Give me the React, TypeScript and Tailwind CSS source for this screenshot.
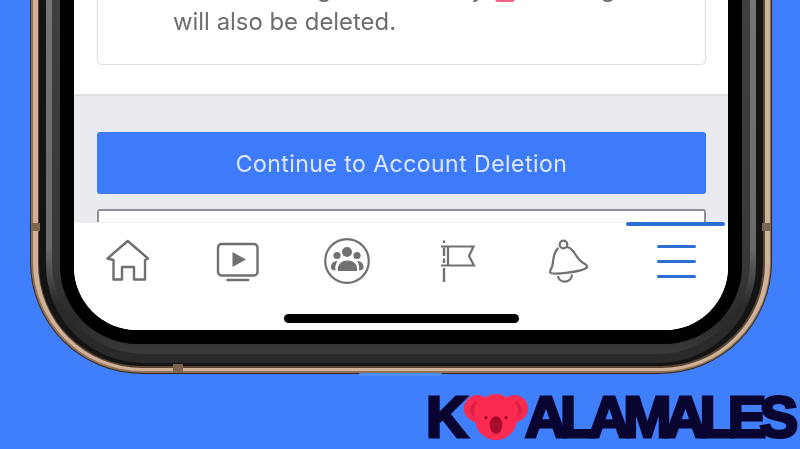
const G = "#6f7072";

function Home() {
  return (
    <svg width="109" height="48" viewBox="74 238 109 48" fill="none" stroke={G} strokeWidth="2.4" strokeLinejoin="round">
      <path d="M127.7 241 L107.5 258.5 L113.5 260 V279.5 H122 V267 H134 V279.5 H145 V260 L148 258.5 Z" />
    </svg>
  );
}

function Video() {
  return (
    <svg width="109" height="48" viewBox="183 238 109 48" fill="none" stroke={G} strokeWidth="2.4">
      <rect x="218" y="244" width="39.5" height="31.5" rx="3.5" />
      <path d="M227.5 280 H248" strokeWidth="2.6" strokeLinecap="round" />
      <path d="M232.5 252 L246 259.5 L232.5 267 Z" fill={G} stroke="none" />
    </svg>
  );
}

function Groups() {
  return (
    <svg width="109" height="48" viewBox="292 238 109 48" fill="none">
      <circle cx="347" cy="261" r="21.8" stroke={G} strokeWidth="2.2" />
      <g fill={G}>
        <circle cx="347" cy="252" r="5" />
        <circle cx="337" cy="255.5" r="3.6" />
        <circle cx="357" cy="255.5" r="3.6" />
        <path d="M338 271 C337 265 341 260.5 347.5 260.5 C354 260.5 358 265 357 271 Z" />
        <path d="M331 268.5 C330.5 264 333 261 337.5 261 C335.5 264 335 267 335.5 270.5 C333.5 270.5 332 269.8 331 268.5 Z" />
        <path d="M363.5 268.5 C364 264 361.5 261 357 261 C359 264 359.5 267 359 270.5 C361 270.5 362.5 269.8 363.5 268.5 Z" />
      </g>
    </svg>
  );
}

function Flag() {
  return (
    <svg width="109" height="48" viewBox="401 238 109 48" fill="none" stroke={G} strokeWidth="2.2">
      <path d="M444 240.5 V243" />
      <path d="M444 247.5 V256 M444 258.5 V263 M444 268 V282" strokeWidth="2.4" />
      <path d="M441 246.5 H473.5 L469 256 L474 265.5 H441" />
      <path d="M448 246.5 V265.5" />
    </svg>
  );
}

function Bell() {
  return (
    <svg width="109" height="48" viewBox="510 238 109 48" fill="none" stroke={G} strokeWidth="2.2" strokeLinejoin="round">
      <circle cx="563.5" cy="244.5" r="3.8" />
      <path d="M558.5 248 C553 252 553.5 260 552.5 265 C552 268.5 549.5 270 550.2 272.5 C551 275.5 584 271.5 586.8 267.5 C588 265.5 585 264 582.5 262.5 C578 259.5 576 255 573 251 C571 248.5 568.5 247.2 567 247" />
      <path d="M558 276 C559 284 571.5 283.5 572 274.5" />
    </svg>
  );
}

function Menu() {
  return (
    <div className="w-full pt-[7px] flex flex-col items-center gap-[12px] pl-[5px]">
      <div className="w-[39px] h-[3px] rounded-full bg-[#2b6fd4]" />
      <div className="w-[39px] h-[3px] rounded-full bg-[#2b6fd4]" />
      <div className="w-[39px] h-[3px] rounded-full bg-[#2b6fd4]" />
    </div>
  );
}

function Koala() {
  return (
    <svg width="64" height="48" viewBox="464 393 64 48" className="shrink-0">
      <circle cx="477.5" cy="408.5" r="13.5" fill="#fb2a50" />
      <circle cx="514.5" cy="408.5" r="13.5" fill="#fb2a50" />
      <ellipse cx="496" cy="419" rx="21" ry="21" fill="#fb2a50" />
      <circle cx="496" cy="411" r="17" fill="#fb2a50" />
      <path d="M478 401 C471 402 467 411 475 418 C473 411 474 405 478 401 Z" fill="#d81f45" />
      <path d="M514 401 C521 402 525 411 517 418 C519 411 518 405 514 401 Z" fill="#d81f45" />
      <circle cx="486" cy="417.7" r="1.8" fill="#a80b2c" />
      <circle cx="506" cy="417.7" r="1.8" fill="#a80b2c" />
      <ellipse cx="496" cy="425" rx="6.3" ry="9" fill="#a80b2c" />
    </svg>
  );
}

export default function App() {
  return (
    <div className="relative w-[800px] h-[449px] overflow-hidden bg-[#3f7ffb] font-['Inter',sans-serif]">
      {/* phone body, nested rings */}
      <div className="blur-[0.4px] ml-[30px] w-[742px] h-[373.5px] px-[1px] pb-[1px] rounded-b-[112px] bg-[#33291f]">
        <div className="h-full px-[1.5px] pb-[1.5px] rounded-b-[111px] bg-[#8f7156]">
          <div className="h-full px-[5px] pb-[3.5px] rounded-b-[109px] bg-[#d0b29a]">
            <div className="h-full px-[1.5px] pb-[2px] rounded-b-[104px] bg-[#5a4635]">
              <div className="h-full px-[7px] pb-[3px] rounded-b-[102px] bg-[#141414]">
                <div className="h-full px-[6px] pb-[9px] rounded-b-[98px] bg-[linear-gradient(to_bottom,#757575_0%,#6a6a6a_68%,#2a2a2a_84%,#2a2a2a_100%)]">
                  <div className="h-full px-[8px] pb-[9.5px] rounded-b-[92px] bg-[linear-gradient(to_bottom,#3f3f3f_0%,#383838_75%,#2a2a2a_90%,#3a3a3a_100%)]">
                    <div className="h-full px-[14px] pb-[14px] rounded-b-[78px] bg-black">
                      <div className="h-full flex flex-col overflow-hidden rounded-b-[63px] bg-white">
                        {/* white section with the clipped card */}
                        <div className="h-[96px] shrink-0 pl-[23px] pr-[22px] border-b-2 border-[#dcdee2]">
                          <div className="flow-root h-[66px] -mt-[1px] rounded-b-[5px] border border-t-0 border-[#dddfe2] pl-[75px] text-[#6d6e70] text-[23.9px] leading-[30px]">
                            <div className="-mt-[25px] whitespace-nowrap">
                              <span className="flex h-[33px]">
                                <span className="ml-[6px] w-[174px]">and Messenger</span>
                                <span className="w-[130px] text-right">account my</span>
                                <span className="mt-[25px] ml-[12px] h-[3px] w-[20px] rounded-b-md bg-[#f0628a]" />
                                <span className="ml-[12px]">messages</span>
                              </span>
                              <span className="block">will also be deleted.</span>
                            </div>
                          </div>
                        </div>
                        {/* grey section */}
                        <div className="h-[126px] shrink-0 overflow-hidden bg-[#e9ebee] pl-[23px] pr-[22px] pt-[35.5px]">
                          <div className="h-[62.5px] pt-[2px] flex items-center justify-center rounded-[3px] bg-[#3e7bfa] text-[#dfe8fb] text-[23px] tracking-[0.47px]">
                            Continue to Account Deletion
                          </div>
                          <div className="mt-[14.5px] h-[20px] rounded-t-[3px] border-2 border-b-0 border-[#8f9195] bg-white" />
                        </div>
                        {/* tab bar */}
                        <div className="relative flex-1 flex flex-col border-t border-[#eeeeee] bg-white">
                          <div className="absolute right-[3px] -top-[1px] w-[99px] h-[4px] rounded-full bg-[#2b6fd4]" />
                          <div className="grid grid-cols-6 h-[48px] mt-[15px]">
                            <Home />
                            <Video />
                            <Groups />
                            <Flag />
                            <Bell />
                            <Menu />
                          </div>
                          <div className="mt-[28px] ml-[210px] w-[235px] h-[9px] rounded-full bg-black" />
                        </div>
                      </div>
                    </div>
                  </div>
                </div>
              </div>
            </div>
          </div>
        </div>
      </div>

      {/* antenna bands and the bump on the lower edge */}
      <div className="absolute left-[31px] top-[223px] w-[9px] h-[8px] bg-[#7d6650]" />
      <div className="absolute left-[762px] top-[223px] w-[9px] h-[8px] bg-[#7d6650]" />
      <div className="absolute left-[173px] top-[364px] w-[10px] h-[9px] bg-[#7d6650]" />
      <div className="absolute left-[358px] top-[373px] w-[85px] h-[3px] rounded-t-full bg-[#4f8cf8]" />

      {/* watermark */}
      <div className="blur-[0.4px] absolute left-[426px] top-[393px] flex items-center h-[48px] font-['Liberation_Sans',sans-serif] font-bold text-[#0a0530] text-[58px] leading-[48px] tracking-[-7px] [-webkit-text-stroke:3px_#0a0530]">
        <span className="w-[38px]">K</span>
        <Koala />
        <span className="-ml-[3px]">ALAMALES</span>
      </div>
    </div>
  );
}
